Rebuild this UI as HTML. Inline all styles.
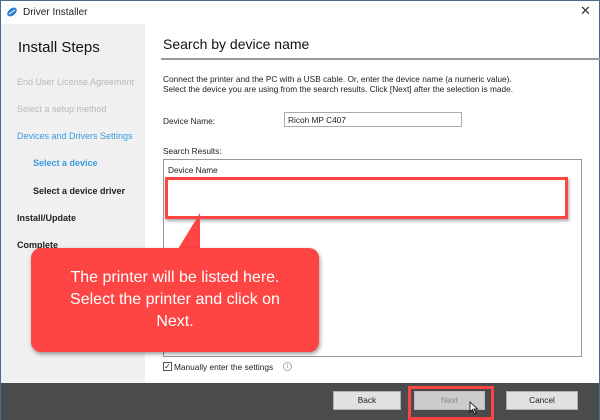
<!DOCTYPE html>
<html><head><style>
*{margin:0;padding:0;box-sizing:border-box}
body{width:600px;height:420px;overflow:hidden;font-family:"Liberation Sans",sans-serif;font-size:9px;color:#222;background:#fff;position:relative}
.abs{position:absolute}
</style></head><body>
<div class="abs" style="left:0;top:0;width:600px;height:420px;border:1px solid #4a6a8a;border-top:none"></div>
<div class="abs" style="left:0;top:0;width:600px;height:1px;background:#4a6a8a"></div>
<svg class="abs" style="left:6px;top:6px" width="12" height="12" viewBox="0 0 12 12"><ellipse cx="6" cy="6" rx="5.5" ry="3.5" transform="rotate(-40 6 6)" fill="#2f7fd0"/><path d="M3 8 L9 4" stroke="#fff" stroke-width="1"/></svg>
<div class="abs" style="left:23px;top:7px;font-size:10px">Driver Installer</div>
<div class="abs" style="left:580px;top:3px;font-size:13px;color:#333">✕</div>
<div class="abs" style="left:1px;top:24px;width:144px;height:359px;background:#f0f0f0"></div>
<div class="abs" style="left:18px;top:39px;font-size:15px;color:#111">Install Steps</div>
<div class="abs" style="left:17px;top:77px;color:#b8b8b8">End User License Agreement</div>
<div class="abs" style="left:17px;top:104px;color:#b8b8b8">Select a setup method</div>
<div class="abs" style="left:17px;top:131px;color:#3a9ae0">Devices and Drivers Settings</div>
<div class="abs" style="left:33px;top:158px;color:#3a9ae0;font-weight:bold">Select a device</div>
<div class="abs" style="left:33px;top:186px;font-weight:bold">Select a device driver</div>
<div class="abs" style="left:17px;top:213px;font-weight:bold">Install/Update</div>
<div class="abs" style="left:17px;top:240px;font-weight:bold">Complete</div>
<div class="abs" style="left:163px;top:36px;font-size:14px;color:#111">Search by device name</div>
<div class="abs" style="left:161px;top:58px;width:439px;height:2px;background:#9a9a9a"></div>
<div class="abs" style="left:163px;top:74px;line-height:10px;font-size:8.3px">Connect the printer and the PC with a USB cable. Or, enter the device name (a numeric value).<br>Select the device you are using from the search results. Click [Next] after the selection is made.</div>
<div class="abs" style="left:163px;top:116px;font-size:8.3px">Device Name:</div>
<div class="abs" style="left:284px;top:112px;width:178px;height:15px;border:1px solid #aaa;font-size:8.3px;padding:2px 3px">Ricoh MP C407</div>
<div class="abs" style="left:163px;top:146px;font-size:8.3px">Search Results:</div>
<div class="abs" style="left:163px;top:159px;width:419px;height:198px;border:1px solid #999"></div>
<div class="abs" style="left:168px;top:165px;font-size:8.3px">Device Name</div>
<div class="abs" style="left:165px;top:177px;width:403px;height:42px;border:3px solid #f44;box-shadow:1px 2px 3px rgba(0,0,0,.35)"></div>
<div class="abs" style="left:163px;top:362px;width:9px;height:9px;border:1px solid #555;font-size:8px;line-height:7px;text-align:center">✓</div>
<div class="abs" style="left:174px;top:362px;font-size:8.3px">Manually enter the settings</div>
<div class="abs" style="left:283px;top:362px;width:9px;height:9px;border:1px solid #aaa;border-radius:50%;font-size:7px;line-height:7px;text-align:center;color:#999">i</div>
<svg class="abs" style="left:0;top:205px" width="330" height="155"><path d="M178 44 L200 8 L200 44 Z" fill="#f44"/><rect x="31" y="43" width="288" height="104" rx="10" fill="#f44" style="filter:drop-shadow(1px 2px 2px rgba(0,0,0,.4))"/></svg>
<div class="abs" style="left:31px;top:267px;width:288px;text-align:center;color:#fff;font-size:16px;line-height:22px">The printer will be listed here.<br>Select the printer and click on<br>Next.</div>
<div class="abs" style="left:1px;top:383px;width:598px;height:37px;background:#4a4b4d"></div>
<div class="abs" style="left:333px;top:391px;width:68px;height:19px;background:#e1e1e1;border:1px solid #adadad;text-align:center;line-height:17px;font-size:8.3px">Back</div>
<div class="abs" style="left:408px;top:386px;width:86px;height:34px;border:3px solid #f44"></div>
<div class="abs" style="left:414px;top:391px;width:71px;height:19px;background:#ccc;border:1px solid #bbb;text-align:center;line-height:17px;font-size:8.3px;color:#888">Next</div>
<svg class="abs" style="left:469px;top:401px" width="10" height="14"><path d="M1 1 L1 11 L3.5 8.5 L5.5 13 L7 12.3 L5 8 L8.5 8 Z" fill="#fff" stroke="#000" stroke-width="0.8"/></svg>
<div class="abs" style="left:506px;top:391px;width:72px;height:19px;background:#e1e1e1;border:1px solid #adadad;text-align:center;line-height:17px;font-size:8.3px">Cancel</div>
</body></html>
